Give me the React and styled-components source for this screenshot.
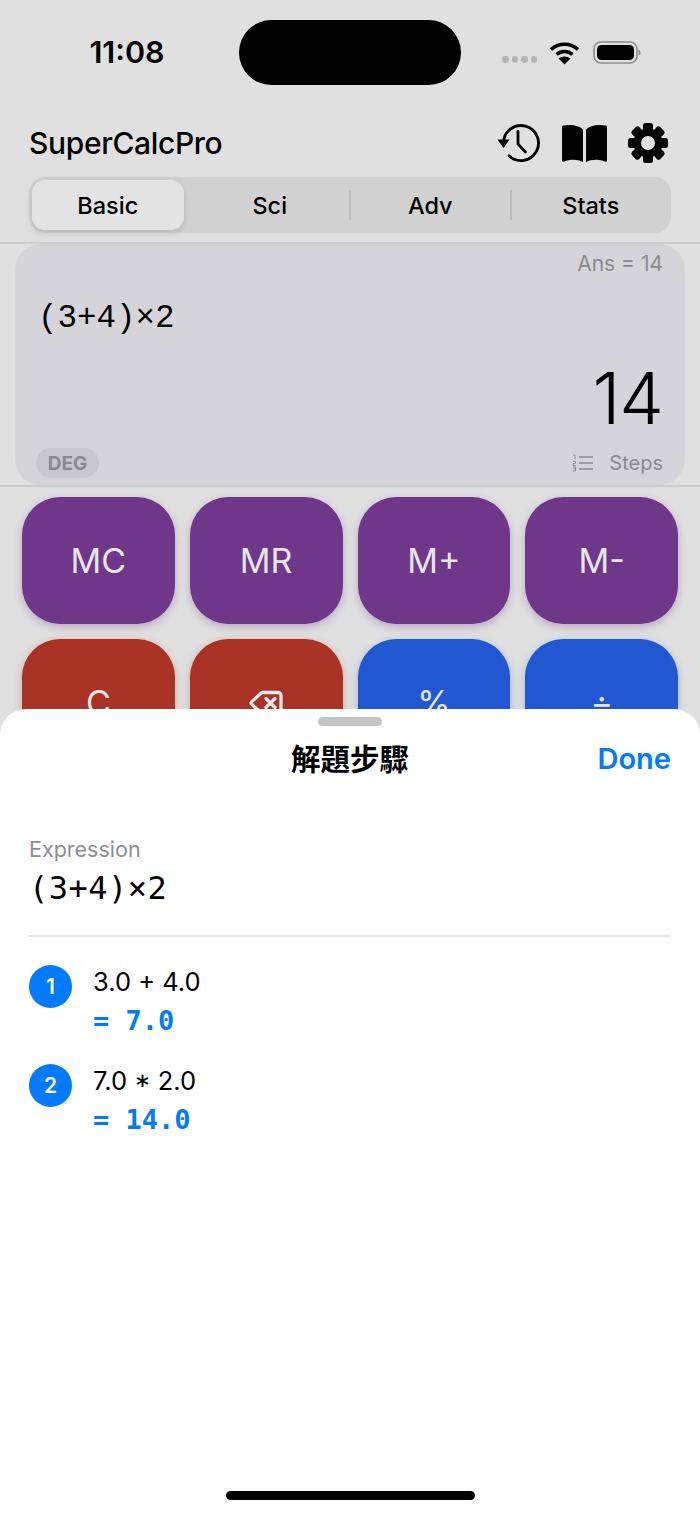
import styled, { createGlobalStyle } from 'styled-components'
import { Delete } from 'lucide-react'

const GlobalStyle = createGlobalStyle`
    html, body {
        margin: 0;
        padding: 0;
        background: #e0e0e0;
    }
    * {
        box-sizing: border-box;
    }
`
const Screen = styled.div`
    position: relative;
    width: 700px;
    height: 1514px;
    overflow: hidden;
    background: #e0e0e0;
    font-family: Inter, "Noto Sans CJK TC", sans-serif;
    color: #000;
`
const StatusBar = styled.div`
    display: grid;
    grid-template-columns: 239px 222px 1fr;
    height: 106px;
    padding-top: 20px;
`
const Time = styled.div`
    height: 63px;
    padding-left: 15px;
    display: flex;
    align-items: center;
    justify-content: center;
    font-size: 30.5px;
    font-weight: 600;
`
const Island = styled.div`
    height: 65px;
    background: #000;
    border-radius: 33px;
`
const StatusIcons = styled.div`
    height: 65px;
    padding-left: 41px;
    display: flex;
    align-items: center;
`
const Dots = styled.div`
    display: flex;
    gap: 3px;
    margin-top: 14px;
    margin-right: 12px;
`
const Dot = styled.span`
    width: 6.5px;
    height: 6.5px;
    border-radius: 50%;
    background: #b4b4b4;
`
const Header = styled.div`
    height: 71px;
    padding: 3px 32px 0 29px;
    display: flex;
    align-items: center;
    justify-content: space-between;
`
const Title = styled.div`
    font-size: 30px;
    font-weight: 550;
    letter-spacing: -0.35px;
`
const IconRow = styled.div`
    display: flex;
    align-items: center;
    gap: 21px;
`
const Tabs = styled.div`
    display: grid;
    grid-template-columns: repeat(4, 1fr);
    height: 56px;
    margin: 0 29px;
    background: #d1d1d1;
    border-radius: 16px;
`
const Tab = styled.div`
    position: relative;
    display: flex;
    align-items: center;
    justify-content: center;
    font-size: 23.5px;
    font-weight: 500;
    ${p => p.$active && `
        margin: 3px 6px 3px 3px;
        background: #e3e3e3;
        border-radius: 13px;
        box-shadow: 0 3px 8px rgba(0,0,0,0.12);
    `}
    ${p => p.$sep && `
        &::before {
            content: '';
            position: absolute;
            left: -1px;
            top: 13px;
            bottom: 13px;
            width: 2px;
            background: #bdbdbd;
        }
    `}
`
const DisplayWrap = styled.div`
    height: 245px;
    margin-top: 9px;
    padding: 0 15px;
    border-top: 2px solid #cbcbcb;
    border-bottom: 2px solid #cbcbcb;
`
const Display = styled.div`
    display: flex;
    flex-direction: column;
    height: 100%;
    padding: 7px 22px 7px 21px;
    background: #d5d5d9;
    border-radius: 26px;
`
const Ans = styled.div`
    align-self: flex-end;
    font-size: 21px;
    line-height: 26px;
    color: #8a8a8e;
`
const Expr = styled.div`
    font-family: "Liberation Mono", monospace;
    font-size: 32.5px;
    line-height: 40px;
    margin: 22px 0 0 2px;
`
const Result = styled.div`
    align-self: flex-end;
    font-size: 71px;
    font-weight: 300;
    line-height: 80px;
    letter-spacing: -1px;
    margin-top: 19px;
`
const DisplayFooter = styled.div`
    display: flex;
    align-items: center;
    justify-content: space-between;
    margin-top: auto;
`
const Deg = styled.div`
    width: 63px;
    height: 30px;
    display: flex;
    align-items: center;
    justify-content: center;
    border-radius: 15px;
    background: #c8c8cc;
    color: #8a8a8e;
    font-size: 19px;
    font-weight: 700;
`
const StepsLink = styled.div`
    display: flex;
    align-items: center;
    gap: 16px;
    font-size: 20px;
    color: #8a8a8e;
`
const Keypad = styled.div`
    display: grid;
    grid-template-columns: repeat(4, 1fr);
    grid-auto-rows: 127px;
    gap: 15px;
    padding: 10px 22px;
`
const Key = styled.div`
    display: flex;
    align-items: center;
    justify-content: center;
    border-radius: 38px;
    background: ${p => p.$color};
    box-shadow: 0 3px 8px ${p => p.$color}55;
    color: #e6e6e6;
    font-size: 34px;
    font-weight: 400;
`
const Sheet = styled.div`
    position: absolute;
    left: 0;
    right: 0;
    top: 709px;
    bottom: 0;
    display: flex;
    flex-direction: column;
    background: #fff;
    border-radius: 26px 26px 0 0;
`
const Grabber = styled.div`
    width: 64px;
    height: 9px;
    margin: 8px auto 0;
    border-radius: 5px;
    background: #c4c4c6;
`
const SheetHeader = styled.div`
    display: grid;
    grid-template-columns: 1fr auto 1fr;
    align-items: center;
    height: 50px;
    margin-top: 7px;
    padding: 0 29px;
`
const SheetTitle = styled.div`
    grid-column: 2;
    font-size: 29.5px;
    font-weight: 700;
    margin-top: -3px;
`
const Done = styled.div`
    justify-self: end;
    color: #007aff;
    font-size: 29px;
    font-weight: 600;
`
const SheetBody = styled.div`
    padding: 0 29px;
    margin-top: 52px;
`
const Label = styled.div`
    font-size: 21.5px;
    line-height: 28px;
    color: #8e8e93;
`
const SheetExpr = styled.div`
    font-family: "DejaVu Sans Mono", monospace;
    font-size: 32px;
    line-height: 40px;
    margin-top: 5px;
    letter-spacing: 0.5px;
`
const Rule = styled.div`
    height: 2px;
    margin: 27px 0 28px;
    background: #e5e5e5;
`
const StepRow = styled.div`
    display: flex;
    gap: 21px;
    margin-bottom: 27px;
`
const StepNum = styled.div`
    flex: none;
    width: 43px;
    height: 43px;
    display: flex;
    align-items: center;
    justify-content: center;
    border-radius: 50%;
    background: #007aff;
    color: #fff;
    font-size: 21px;
    font-weight: 600;
`
const StepText = styled.div`
    font-size: 25.5px;
    line-height: 33px;
`
const StepValue = styled.div`
    font-family: "DejaVu Sans Mono", monospace;
    font-size: 27px;
    font-weight: 700;
    line-height: 33px;
    margin-top: 6px;
    color: #007aff;
`
const HomeBar = styled.div`
    width: 249px;
    height: 9px;
    margin: auto auto 14px;
    border-radius: 5px;
    background: #000;
`

const WifiIcon = () => (
    <svg width="31" height="24" viewBox="0 0 31 24">
        <path d="M2 8.5C9.5 1.5 21.5 1.5 29 8.5" fill="none" stroke="#000" strokeWidth="3.6" />
        <path d="M7.5 13.5C12 9.5 19 9.5 23.5 13.5" fill="none" stroke="#000" strokeWidth="3.6" />
        <path d="M15.5 23.5L9.5 17.5C13 14.7 18 14.7 21.5 17.5Z" fill="#000" />
    </svg>
)

const BatteryIcon = () => (
    <svg width="48" height="24" viewBox="0 0 48 24" style={{ marginLeft: 13 }}>
        <rect x="1" y="1" width="43" height="21" rx="7" fill="none" stroke="#8d8d8d" strokeWidth="1.6" />
        <rect x="4" y="4" width="37" height="15" rx="4.5" fill="#000" />
        <path d="M45.5 8.5C47 9 47.5 10 47.5 11.5C47.5 13 47 14 45.5 14.5Z" fill="#8d8d8d" />
    </svg>
)

const HistoryIcon = () => (
    <svg width="44" height="44" viewBox="0 0 44 44" fill="none">
        <path d="M6.5 22A17.5 17.5 0 1 1 12 34.8" stroke="#000" strokeWidth="2.8" strokeLinecap="round" />
        <path d="M0.5 18.5H12.5L6.5 27Z" fill="#000" />
        <path d="M21 10.5V23L28.5 31" stroke="#000" strokeWidth="2.8" strokeLinecap="round" strokeLinejoin="round" />
    </svg>
)

const BookIcon = () => (
    <svg width="45" height="40" viewBox="0 0 45 40">
        <path d="M21 6.5C17 2.5 10 1 1 2.5C0.5 2.6 0 3 0 4V37.5C0 38.5 0.8 39 2 38.5C8 36.2 15.5 36 21 39Z" fill="#000" />
        <path d="M24 6.5C28 2.5 35 1 44 2.5C44.5 2.6 45 3 45 4V37.5C45 38.5 44.2 39 43 38.5C37 36.2 29.5 36 24 39Z" fill="#000" />
    </svg>
)

const GearIcon = () => (
    <svg width="40" height="40" viewBox="0 0 40 40">
        <path
            fillRule="evenodd"
            fill="#000"
            d="M20 5.5A14.5 14.5 0 1 0 20 34.5A14.5 14.5 0 1 0 20 5.5ZM20 13A7 7 0 1 1 20 27A7 7 0 1 1 20 13Z"
        />
        {[0, 45, 90, 135, 180, 225, 270, 315].map(a => (
            <rect key={a} x="15" y="0" width="10" height="8" rx="2.5" fill="#000" transform={`rotate(${a} 20 20)`} />
        ))}
    </svg>
)

const ListIcon = () => (
    <svg width="21" height="18" viewBox="0 0 21 18" fill="none">
        <path d="M7 3H21M7 9H21M7 15H21" stroke="#8a8a8e" strokeWidth="1.6" />
        <path d="M1 1H3V5M1 7.5H3.5V9.5H1V11.5H3.5M1 13H3.5V17H1M1.5 15H3.5" stroke="#8a8a8e" strokeWidth="0.9" />
    </svg>
)

const keys = [
    { label: 'MC', color: '#6e3789' },
    { label: 'MR', color: '#6e3789' },
    { label: 'M+', color: '#6e3789' },
    { label: 'M-', color: '#6e3789' },
    { label: 'C', color: '#a83224' },
    { label: <Delete size={36} strokeWidth={2.2} />, color: '#a83224' },
    { label: '%', color: '#2157d1' },
    { label: '÷', color: '#2157d1' },
]

const steps = [
    { text: '3.0 + 4.0', value: '= 7.0' },
    { text: '7.0 * 2.0', value: '= 14.0' },
]

const App = () => {
    return (
        <Screen>
            <GlobalStyle />
            <StatusBar>
                <Time>11:08</Time>
                <Island />
                <StatusIcons>
                    <Dots>
                        <Dot /><Dot /><Dot /><Dot />
                    </Dots>
                    <WifiIcon />
                    <BatteryIcon />
                </StatusIcons>
            </StatusBar>
            <Header>
                <Title>SuperCalcPro</Title>
                <IconRow>
                    <HistoryIcon />
                    <BookIcon />
                    <GearIcon />
                </IconRow>
            </Header>
            <Tabs>
                <Tab $active>Basic</Tab>
                <Tab>Sci</Tab>
                <Tab $sep>Adv</Tab>
                <Tab $sep>Stats</Tab>
            </Tabs>
            <DisplayWrap>
                <Display>
                    <Ans>Ans = 14</Ans>
                    <Expr>(3+4)×2</Expr>
                    <Result>14</Result>
                    <DisplayFooter>
                        <Deg>DEG</Deg>
                        <StepsLink>
                            <ListIcon />
                            Steps
                        </StepsLink>
                    </DisplayFooter>
                </Display>
            </DisplayWrap>
            <Keypad>
                {keys.map((k, i) => (
                    <Key key={i} $color={k.color}>{k.label}</Key>
                ))}
            </Keypad>
            <Sheet>
                <Grabber />
                <SheetHeader>
                    <SheetTitle>解題步驟</SheetTitle>
                    <Done>Done</Done>
                </SheetHeader>
                <SheetBody>
                    <Label>Expression</Label>
                    <SheetExpr>(3+4)×2</SheetExpr>
                    <Rule />
                    {steps.map((s, i) => (
                        <StepRow key={i}>
                            <StepNum>{i + 1}</StepNum>
                            <div>
                                <StepText>{s.text}</StepText>
                                <StepValue>{s.value}</StepValue>
                            </div>
                        </StepRow>
                    ))}
                </SheetBody>
                <HomeBar />
            </Sheet>
        </Screen>
    )
}

export default App
